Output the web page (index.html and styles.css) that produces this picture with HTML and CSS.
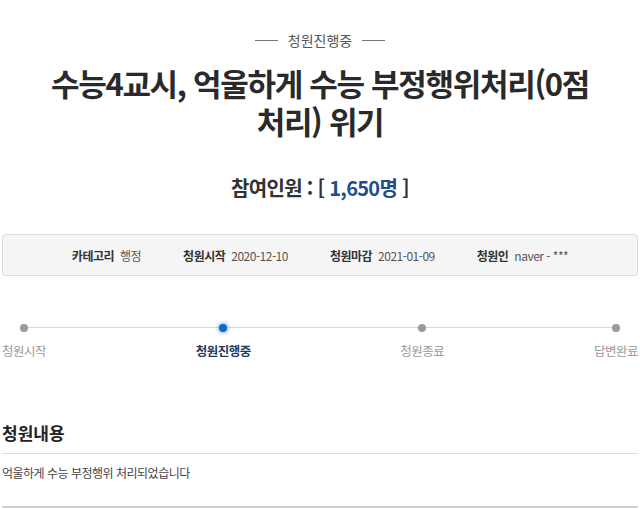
FILE: index.html
```html
<!DOCTYPE html>
<html lang="ko">
<head>
<meta charset="utf-8">
<link rel="stylesheet" href="styles.css">
</head>
<body>
<div class="page">
  <div class="status"><span class="dash"></span><span>청원진행중</span><span class="dash"></span></div>
  <h1 class="title">수능4교시, 억울하게 수능 부정행위처리(0점<br>처리) 위기</h1>
  <div class="count">참여인원 : [ <span class="num">1,650명</span> ]</div>
  <div class="info">
    <div class="info-item"><span class="k">카테고리</span><span class="v">행정</span></div>
    <div class="info-item"><span class="k">청원시작</span><span class="v">2020-12-10</span></div>
    <div class="info-item"><span class="k">청원마감</span><span class="v">2021-01-09</span></div>
    <div class="info-item"><span class="k">청원인</span><span class="v">naver - ***</span></div>
  </div>
  <div class="steps">
    <div class="step"><span class="dot"></span><span class="lbl">청원시작</span></div>
    <div class="step active"><span class="dot"></span><span class="lbl">청원진행중</span></div>
    <div class="step"><span class="dot"></span><span class="lbl">청원종료</span></div>
    <div class="step"><span class="dot"></span><span class="lbl">답변완료</span></div>
  </div>
  <h2 class="sec">청원내용</h2>
  <p class="content">억울하게 수능 부정행위 처리되었습니다</p>
  <div class="bottom"></div>
</div>
</body>
</html>
```

FILE: styles.css
```css
html, body { margin: 0; padding: 0; background: #fff; }
body { font-family: "Noto Sans CJK KR", "Noto Sans", sans-serif; color: #333; }
.page { width: 636px; padding: 30px 2px 0; }
.status { display: flex; justify-content: center; align-items: center; gap: 10px; font-size: 14px; line-height: 20px; color: #555; }
.dash { display: block; width: 23px; height: 1px; background: #777; }
.title { margin: 14px 0 0; text-align: center; font-size: 31px; line-height: 38px; font-weight: 700; letter-spacing: -1.3px; color: #2a2a2a; }
.count { margin-top: 33px; text-align: center; font-size: 20px; line-height: 30px; font-weight: 700; color: #333; letter-spacing: -0.7px; }
.count .num { color: #1f4f8b; }
.info { margin-top: 31px; height: 40px; border: 1px solid #dcdcdc; border-radius: 3px; background: #f5f5f5; display: flex; justify-content: center; align-items: center; gap: 42px; font-size: 12px; }
.info-item { display: flex; gap: 6px; align-items: baseline; letter-spacing: -0.5px; }
.info-item .k { font-weight: 700; color: #333; }
.info-item .v { color: #555; }
.steps { position: relative; margin-top: 48px; display: flex; justify-content: space-between; }
.steps::before { content: ""; position: absolute; left: 22px; right: 22px; top: 3px; height: 1px; background: #d8d8d8; }
.step { position: relative; display: flex; flex-direction: column; align-items: center; gap: 10px; }
.dot { width: 8px; height: 8px; border-radius: 50%; background: #9a9a9a; }
.lbl { font-size: 12.5px; line-height: 18px; color: #999; letter-spacing: -0.5px; }
.step.active .dot { background: #1466c0; box-shadow: 0 0 3px 2px rgba(80,150,230,0.45); }
.step.active .lbl { color: #1d3a60; font-weight: 700; }
.sec { margin: 61px 0 0; padding-bottom: 8px; border-bottom: 1px solid #dedede; font-size: 17px; line-height: 24px; font-weight: 700; color: #222; }
.content { margin: 9px 0 0; font-size: 12px; line-height: 20px; color: #444; letter-spacing: -0.5px; }
.bottom { margin-top: 23px; height: 2px; background: #d0d0d0; }
```
